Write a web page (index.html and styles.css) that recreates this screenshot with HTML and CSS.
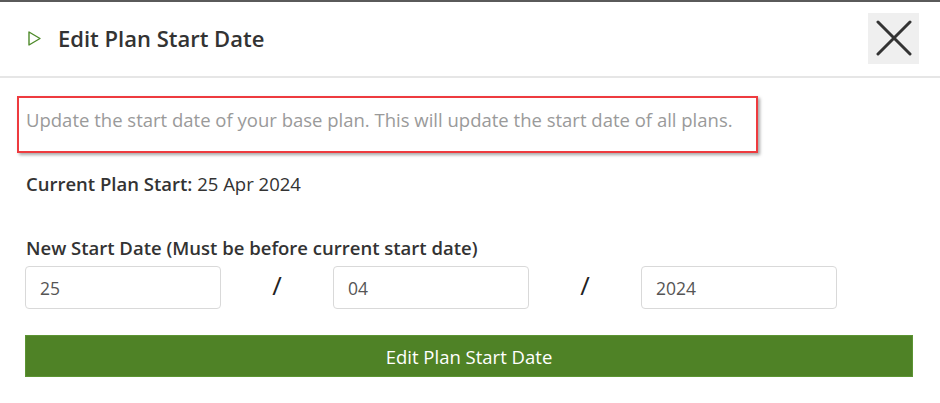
FILE: index.html
```html
<!DOCTYPE html>
<html lang="en">
<head>
  <meta charset="UTF-8">
  <meta name="viewport" content="width=device-width, initial-scale=1.0">
  <title>Edit Plan Start Date</title>
  <link rel="stylesheet" href="styles.css">
</head>
<body>
  <div class="modal">
    <div class="modal-header">
      <h2 class="modal-title">
        <svg class="play-icon" width="13" height="15" viewBox="0 0 13 15">
          <path d="M1 1 L12 7.5 L1 14 Z" fill="none" stroke="#4e8a2a" stroke-width="1.4" stroke-linejoin="round"/>
        </svg>
        Edit Plan Start Date
      </h2>
      <button class="close-btn" aria-label="Close">
        <svg width="36" height="36" viewBox="0 0 36 36">
          <path d="M2 2 L34 34 M34 2 L2 34" stroke="#333" stroke-width="3" stroke-linecap="round"/>
        </svg>
      </button>
    </div>

    <div class="modal-body">
      <div class="notice">
        <p>Update the start date of your base plan. This will update the start date of all plans.</p>
      </div>

      <p class="current"><strong>Current Plan Start:</strong> 25 Apr 2024</p>

      <label class="field-label">New Start Date (Must be before current start date)</label>
      <div class="date-row">
        <input type="text" value="25">
        <span class="sep">/</span>
        <input type="text" value="04">
        <span class="sep">/</span>
        <input type="text" value="2024">
      </div>

      <button class="submit-btn">Edit Plan Start Date</button>
    </div>
  </div>
</body>
</html>
```

FILE: styles.css
```css
body {
  font-family: "Open Sans", "Noto Sans", sans-serif;
  margin: 0;
  padding: 0;
  background: #fff;
  color: #333;
  border-top: 2px solid #5a5a5a;
}
.modal-header {
  display: flex;
  align-items: center;
  justify-content: space-between;
  height: 74px;
  padding: 0 21px 0 28px;
  border-bottom: 2px solid #e6e6e6;
}
.modal-title {
  display: flex;
  align-items: center;
  gap: 17px;
  margin: 0;
  font-size: 22px;
  font-weight: 600;
  color: #333;
  padding-bottom: 2px;
}
.play-icon {
  display: block;
}
.close-btn {
  width: 51px;
  height: 51px;
  background: #efefef;
  border: none;
  padding: 0;
  display: flex;
  align-items: center;
  justify-content: center;
  cursor: pointer;
  margin-bottom: 2px;
}
.modal-body {
  padding: 18px 27px 0 25px;
}
.notice {
  margin-left: -8px;
  width: 730px;
  height: 53px;
  border: 2px solid #ee3b3f;
  box-shadow: 2px 2px 3px rgba(0,0,0,0.35);
  display: flex;
  align-items: center;
  padding-left: 7px;
  box-sizing: content-box;
}
.notice p {
  margin: 0;
  font-size: 18.5px;
  color: #9a9a9a;
  padding-bottom: 10px;
}
.current {
  margin: 18px 0 0 1px;
  font-size: 18.5px;
  color: #333;
}
.current strong {
  font-weight: 600;
}
.field-label {
  display: block;
  margin: 39px 0 0 1px;
  font-size: 18.5px;
  font-weight: 600;
  color: #333;
}
.date-row {
  display: flex;
  align-items: center;
  margin-top: 6px;
}
.date-row input {
  width: 196px;
  height: 43px;
  box-sizing: border-box;
  border: 1px solid #d9d9d9;
  border-radius: 4px;
  padding: 0 14px;
  font-family: inherit;
  font-size: 17.5px;
  color: #555;
}
.sep {
  width: 112px;
  text-align: center;
  font-size: 26px;
  color: #222;
  padding-bottom: 6px;
}
.submit-btn {
  display: block;
  width: 888px;
  height: 42px;
  margin-top: 26px;
  background: #4f8226;
  border: 1px solid #5c9433;
  color: #fff;
  font-family: inherit;
  font-size: 18.5px;
  cursor: pointer;
}
```
